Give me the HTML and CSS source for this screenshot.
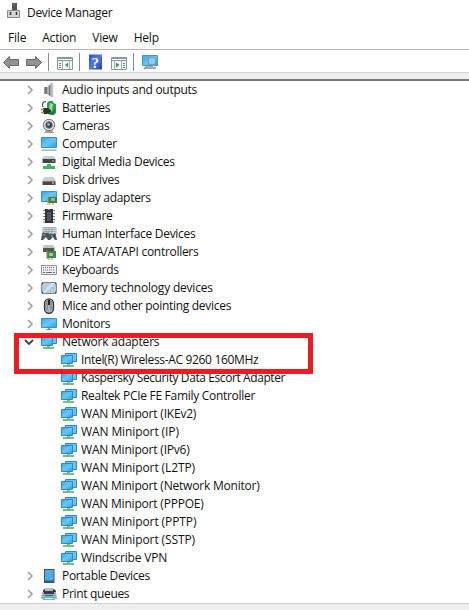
FILE: index.html
```
<!DOCTYPE html>
<html lang="en">
<head>
<meta charset="utf-8">
<title>Device Manager</title>
<link rel="stylesheet" href="styles.css">
</head>
<body>
<svg class="defs" aria-hidden="true">
  <defs>
    <linearGradient id="blue" x2="1" y2="1"><stop stop-color="#37a5e8"/><stop offset=".5" stop-color="#69c7f6"/><stop offset="1" stop-color="#2c9be3"/></linearGradient>
    <linearGradient id="help" x2="1" y2="1"><stop stop-color="#315ac3"/><stop offset=".5" stop-color="#4f77e0"/><stop offset="1" stop-color="#233f9f"/></linearGradient>
    <symbol id="chev" viewBox="0 0 8 10"><path d="M2 1 6 5 2 9" fill="none" stroke="#a2a2a2" stroke-width="1.700"/></symbol>
    <symbol id="open" viewBox="0 0 10 8"><path d="M1 2 5 6 9 2" fill="none" stroke="#404040" stroke-width="1.800"/></symbol>
    <symbol id="audio" viewBox="0 0 16 16"><path d="M3.500 5h3v7h-3z" fill="#777"/><path d="m6 5 5-4.500v15L6 12z" fill="#a9adb0"/><path d="M8.500 3.500v10M4 5v7" stroke="#73777b"/><path d="M11.500 1v14" stroke="#c3c8cc" stroke-width="1.500"/></symbol>
    <symbol id="battery" viewBox="0 0 16 16"><path d="m6 3 1-1 1-1h4l.5 2L15 4v9l-2 2H9l-3-2z" fill="#2d9b49"/><path d="m9 3 3 1-1 7-3-1z" fill="#9ae2a3"/><path d="M7 13q6 2 7-4M2 7Q0 2 5 1.500" fill="none" stroke="#226638" stroke-width="1.100"/><path d="M2 8h5l3 2v2l-4 2H3l-1-2z" fill="#263a2b"/><path d="M0 9.500h3M0 12.500h3" stroke="#9a9342" stroke-width="1.300"/></symbol>
    <symbol id="camera" viewBox="0 0 16 16"><path d="M5 12h6l2 3H3z" fill="#aaa29a"/><circle cx="8" cy="7" r="5.700" fill="#ddd" stroke="#76797b"/><circle cx="8" cy="7" r="3.300" fill="#36404e" stroke="#6e7479"/><circle cx="7.500" cy="6.500" r="1.300" fill="#a8c9e7"/></symbol>
    <symbol id="computer" viewBox="0 0 16 16"><path d="M.5 1.500h15v10H.5z" fill="url(#blue)" stroke="#3d93c4"/><path d="M1 13.500h14l1 1.500H0z" fill="#a6b4c1"/></symbol>
    <symbol id="monitor" viewBox="0 0 16 16"><path d="M.5 2.500h15v9H.5z" fill="url(#blue)" stroke="#3d93c4"/><path d="M7 12h2v1h2v1H5v-1h2z" fill="#85939d"/></symbol>
    <symbol id="disk" viewBox="0 0 16 16"><path d="m1.500 8 2-3h9l2 3v1h-13z" fill="#ccc"/><path d="M1.500 9h13v4h-13z" fill="#454949"/><path d="M2 9.500h12" stroke="#777"/><path d="M11 11h2" stroke="#eee"/></symbol>
    <symbol id="media" viewBox="0 0 16 16"><path d="m1.500 4 2-2h9l2 2v1h-13z" fill="#c9cccb"/><path d="M1.500 5h13v4h-13z" fill="#3e4642"/><path d="M6 10h4v2h4v3H2v-3h4z" fill="#42b361"/><path d="M11 7h2" stroke="#8ce79b"/></symbol>
    <symbol id="display" viewBox="0 0 16 16"><path d="M.5 1.500h15v10H.5z" fill="url(#blue)" stroke="#3d93c4"/><path d="M7 7h9v6H7z" fill="#377f57"/><path d="M10 8h4v3h-4z" fill="#9eb078"/><path d="M7 6v9M9 13v2M12 13v2" stroke="#b39b4a"/></symbol>
    <symbol id="chip" viewBox="0 0 16 16"><path d="M2 2.500h12M2 5.500h12M2 8.500h12M2 11.500h12M2 14h12" stroke="#777"/><path d="M4 1h3q1 1.500 2 0h3v14H4z" fill="#303438"/><path d="M6 4h4v9H6z" fill="#50555a"/></symbol>
    <symbol id="hid" viewBox="0 0 16 16"><path d="M2 1.500h13v7H2z" fill="#d4dde1" stroke="#9faeb5"/><path d="M3 3.500h11M3 5.500h11M5 2v6M8 2v6M11 2v6" stroke="#879399" stroke-width=".7"/><path d="M1 8q1-3 3-1h2q2-2 2 2l1 5H7l-2-3-3 3H0zM8 9q1-3 3-1h1q3-2 3 2l1 4h-2l-2-3-3 3z" fill="#47565d"/><path d="M2 9h2M10 10h2" stroke="#a8bfcb"/></symbol>
    <symbol id="ide" viewBox="0 0 16 16"><path d="m2 3 1-2h9l2 3v3H2z" fill="#bfc5c1"/><path d="M2 4h11v4H2z" fill="#4d5651"/><path d="M6 7h9v7H6z" fill="#40864e"/><path d="M8 9h4v3H8z" fill="#b1c48d"/><path d="M6 6v9M8 14v2M11 14v2" stroke="#92884d"/></symbol>
    <symbol id="keyboard" viewBox="0 0 16 16"><path d="M.5 3.500h15v9H.5z" fill="#ecefef" stroke="#92999d"/><path d="M2 5.500h12M2 8h12" stroke="#697379" stroke-dasharray="1 1"/><path d="M2 10.500h2m1 0h6m1 0h2" stroke="#656d71"/></symbol>
    <symbol id="memory" viewBox="0 0 16 16"><rect x=".5" y="2.500" width="15" height="11" rx="1" fill="#bacbd8" stroke="#768692"/><path d="m2 12 9-9h3L4 13z" fill="#dae5ed"/><path d="M1 3.500h1m12 0h1M1 12.500h1m12 0h1" stroke="#33414a" stroke-width="1.500"/></symbol>
    <symbol id="mouse" viewBox="0 0 16 16"><rect x="3.500" y=".8" width="9" height="14.500" rx="4.500" fill="#a9afb4" stroke="#303338" stroke-width="1.300"/><path d="M6 3v9M10 3v9" stroke="#70757a"/><path d="M8 2v5" stroke="#202328" stroke-width="2"/></symbol>
    <symbol id="network" viewBox="0 0 16 16"><path d="M4.500 1.500h11v8h-11z" fill="#67c3f4" stroke="#3289ba"/><path d="M.5 3.500h11v8H.5z" fill="url(#blue)" stroke="#3289ba"/><path d="M6 12h3v1h4v2H2v-2h4z" fill="#75bd88"/></symbol>
    <symbol id="portable" viewBox="0 0 16 16"><rect x="3.500" y="1.500" width="9.500" height="13" fill="#2f82b9" stroke="#33556d"/><path d="M4 2h8.500v10H4z" fill="#54abe3"/><path d="M4 13.500h8.500" stroke="#405a6c"/></symbol>
    <symbol id="printer" viewBox="0 0 16 16"><path d="m2 4 2-1h9l2 2v3H2z" fill="#353c42"/><path d="M1 6h2v2h10V6h2l1 7H0z" fill="#a5acb2"/><path d="M4 2h8v3H4z" fill="#aebac2"/><path d="M4 9h8l2 5H2z" fill="#65baca"/><path d="M4 9.500h8" stroke="#416474"/><path d="M4 12h8v1H4z" fill="#d4e9e9"/></symbol>
  </defs>
</svg>
<header class="title">
  <svg class="app-icon" viewBox="0 0 14 16"><path d="M5 0h5v7H5z" fill="#555"/><path d="M6.500 1.500h1" stroke="#aaa"/><path d="M.5 7.500h12v7H.5z" fill="#d6d6d6" stroke="#888"/><path d="M3.500 9v3M9.500 9v3" stroke="#333" stroke-width="1.500"/></svg>
  <span>Device Manager</span>
</header>
<nav class="menu"><span>File</span><span>Action</span><span>View</span><span>Help</span></nav>
<div class="toolbar">
  <svg width="160" height="22" viewBox="0 50 160 22">
    <path d="m3.500 62.500 6-6v3h9v6h-9v3z" fill="#929292" stroke="#686868"/>
    <path d="m41.500 62.500-6-6v3h-9v6h9v3z" fill="#929292" stroke="#686868"/>
    <path d="M48.500 53v18M79.500 53v18M133.500 53v18" stroke="#8c8c8c"/>
    <path d="M57.500 57.500h15v12h-15z" fill="#f6f8f8" stroke="#89969c"/><path d="M58 58.500h14M58 60.500h14" stroke="#8b9ba3"/><path d="M62.500 61v8M69.500 61v8" stroke="#a4afb4"/><path d="M59 63.500h2m-2 2h2m-2 2h2" stroke="#6585a0"/><path d="m68 62.500v5l-3-2.500z" fill="#379a43"/>
    <path d="M89 54.500h13v15H89z" fill="url(#help)"/><text class="question" x="91.500" y="67.500">?</text>
    <path d="M111.500 57.500h15v12h-15z" fill="#f6f8f8" stroke="#89969c"/><path d="M112 58.500h14M112 60.500h14" stroke="#8b9ba3"/><path d="M121.500 61v8M114.500 61v8" stroke="#a4afb4"/><path d="M123 63.500h2m-2 2h2m-2 2h2" stroke="#6585a0"/><path d="m116 62.500v5l3.500-2.500z" fill="#379a43"/>
    <path d="M142.500 55.500h15v10h-15z" fill="url(#blue)" stroke="#4698bc"/><path d="M148 66h5v1h3v2h-11v-2h3z" fill="#9baab3"/><circle cx="152" cy="61" r="4" fill="#8bd0ef" stroke="#6d98ae"/><path d="m149 64-5 5" stroke="#769bad" stroke-width="1.500"/>
  </svg>
</div>
<div class="strip"></div>
<main class="tree">
  <div class="row snug"><svg class="arrow"><use href="#chev"/></svg><svg class="icon"><use href="#audio"/></svg><span>Audio inputs and outputs</span></div>
  <div class="row"><svg class="arrow"><use href="#chev"/></svg><svg class="icon"><use href="#battery"/></svg><span>Batteries</span></div>
  <div class="row snug"><svg class="arrow"><use href="#chev"/></svg><svg class="icon"><use href="#camera"/></svg><span>Cameras</span></div>
  <div class="row"><svg class="arrow"><use href="#chev"/></svg><svg class="icon"><use href="#computer"/></svg><span>Computer</span></div>
  <div class="row snug"><svg class="arrow"><use href="#chev"/></svg><svg class="icon"><use href="#media"/></svg><span>Digital Media Devices</span></div>
  <div class="row snug"><svg class="arrow"><use href="#chev"/></svg><svg class="icon"><use href="#disk"/></svg><span>Disk drives</span></div>
  <div class="row snug"><svg class="arrow"><use href="#chev"/></svg><svg class="icon"><use href="#display"/></svg><span>Display adapters</span></div>
  <div class="row snug"><svg class="arrow"><use href="#chev"/></svg><svg class="icon"><use href="#chip"/></svg><span>Firmware</span></div>
  <div class="row snug"><svg class="arrow"><use href="#chev"/></svg><svg class="icon"><use href="#hid"/></svg><span>Human Interface Devices</span></div>
  <div class="row snug"><svg class="arrow"><use href="#chev"/></svg><svg class="icon"><use href="#ide"/></svg><span>IDE ATA/ATAPI controllers</span></div>
  <div class="row snug"><svg class="arrow"><use href="#chev"/></svg><svg class="icon"><use href="#keyboard"/></svg><span>Keyboards</span></div>
  <div class="row"><svg class="arrow"><use href="#chev"/></svg><svg class="icon"><use href="#memory"/></svg><span>Memory technology devices</span></div>
  <div class="row snug"><svg class="arrow"><use href="#chev"/></svg><svg class="icon"><use href="#mouse"/></svg><span>Mice and other pointing devices</span></div>
  <div class="row snug"><svg class="arrow"><use href="#chev"/></svg><svg class="icon"><use href="#monitor"/></svg><span>Monitors</span></div>
  <div class="row expanded"><svg class="arrow"><use href="#open"/></svg><svg class="icon"><use href="#network"/></svg><span>Network adapters</span></div>
  <div class="row child tight"><svg class="icon"><use href="#network"/></svg><span>Intel(R) Wireless-AC 9260 160MHz</span></div>
  <div class="row child tighter"><svg class="icon"><use href="#network"/></svg><span>Kaspersky Security Data Escort Adapter</span></div>
  <div class="row child snug"><svg class="icon"><use href="#network"/></svg><span>Realtek PCIe FE Family Controller</span></div>
  <div class="row child"><svg class="icon"><use href="#network"/></svg><span>WAN Miniport (IKEv2)</span></div>
  <div class="row child loose"><svg class="icon"><use href="#network"/></svg><span>WAN Miniport (IP)</span></div>
  <div class="row child"><svg class="icon"><use href="#network"/></svg><span>WAN Miniport (IPv6)</span></div>
  <div class="row child loose"><svg class="icon"><use href="#network"/></svg><span>WAN Miniport (L2TP)</span></div>
  <div class="row child"><svg class="icon"><use href="#network"/></svg><span>WAN Miniport (Network Monitor)</span></div>
  <div class="row child"><svg class="icon"><use href="#network"/></svg><span>WAN Miniport (PPPOE)</span></div>
  <div class="row child loose"><svg class="icon"><use href="#network"/></svg><span>WAN Miniport (PPTP)</span></div>
  <div class="row child loose"><svg class="icon"><use href="#network"/></svg><span>WAN Miniport (SSTP)</span></div>
  <div class="row child"><svg class="icon"><use href="#network"/></svg><span>Windscribe VPN</span></div>
  <div class="row tight"><svg class="arrow"><use href="#chev"/></svg><svg class="icon"><use href="#portable"/></svg><span>Portable Devices</span></div>
  <div class="row tight"><svg class="arrow"><use href="#chev"/></svg><svg class="icon"><use href="#printer"/></svg><span>Print queues</span></div>
  <div class="highlight"></div>
</main>
<footer class="status"></footer>
</body>
</html>
```

FILE: styles.css
```
* { box-sizing: border-box; }
body {
  margin: 0;
  width: 469px;
  height: 610px;
  overflow: hidden;
  background: #fff;
  color: #111;
  font: 12px/18px "Open Sans", "Noto Sans", sans-serif;
  letter-spacing: -0.2px;
}
svg { display: block; flex: none; }
.defs { position: absolute; width: 0; height: 0; }
.title { display: flex; align-items: center; height: 25px; padding-left: 7px; gap: 6px; letter-spacing: -0.32px; }
.app-icon { width: 14px; height: 16px; margin-top: -3px; }
.menu { display: flex; align-items: center; gap: 16px; height: 24px; padding: 2px 0 0 8px; }
.toolbar { height: 23px; border-top: 1px solid #b5b5b5; }
.question { font: bold 15px "Liberation Serif", serif; fill: #fff; }
.strip { height: 9px; background: #efefef; border-top: 1px solid #d5d5d5; border-bottom: 2px solid #777; }
.tree { position: relative; height: 522px; }
.row { display: flex; align-items: center; height: 18px; padding-left: 26px; white-space: nowrap; }
.arrow { width: 8px; height: 10px; margin-right: 7px; }
.row.expanded { padding-left: 24px; }
.expanded .arrow { width: 10px; height: 8px; }
.icon { width: 16px; height: 16px; margin-right: 5px; }
.row.child { padding-left: 61px; }
.child .icon { margin-right: 4px; }
.snug { letter-spacing: -0.29px; }
.tight { letter-spacing: -0.33px; }
.tighter { letter-spacing: -0.41px; }
.loose { letter-spacing: -0.1px; }
.highlight { position: absolute; left: 14px; top: 252px; width: 299px; height: 41px; border: 5px solid #eb1c24; }
.status { height: 7px; background: #efefef; border-top: 1px solid #d0d0d0; }
```
